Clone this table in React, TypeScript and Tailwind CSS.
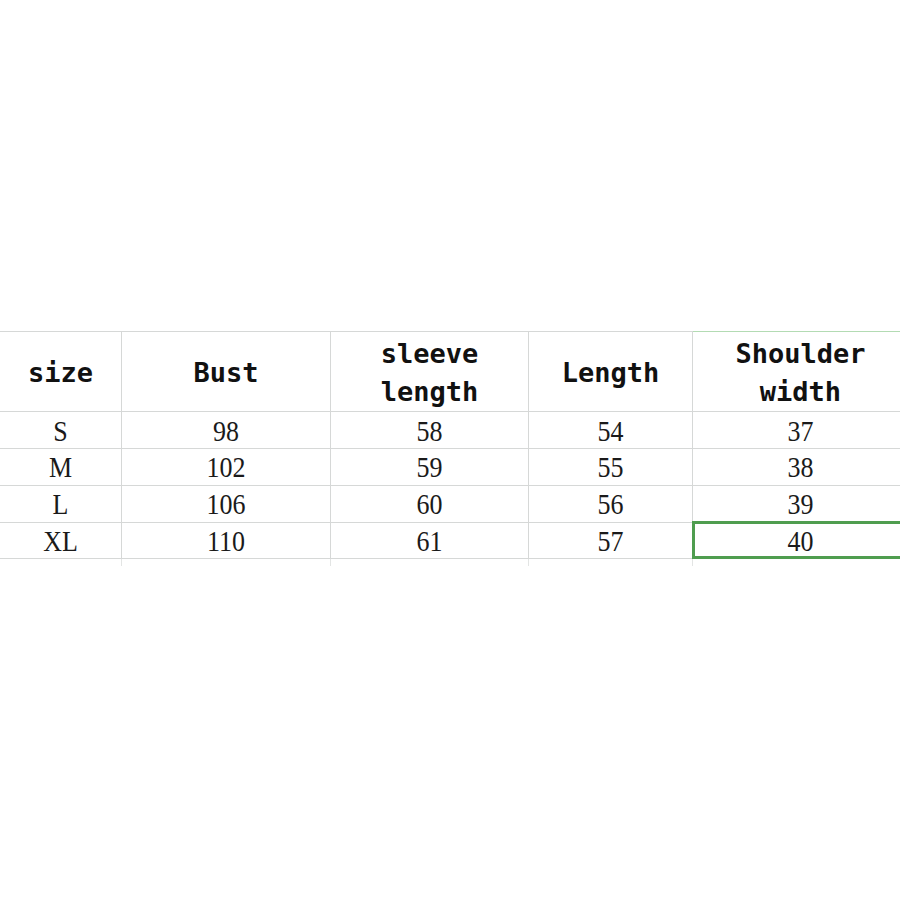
import React from 'react';

const headers = ['size', 'Bust', 'sleeve\nlength', 'Length', 'Shoulder\nwidth'];

const rows = [
  ['S', '98', '58', '54', '37'],
  ['M', '102', '59', '55', '38'],
  ['L', '106', '60', '56', '39'],
  ['XL', '110', '61', '57', '40'],
];

const cols = 'grid grid-cols-[122px_209px_198px_164px_207px]';

export default function App() {
  return (
    <div className="w-[900px] h-[900px] bg-white overflow-hidden pt-[331px]">
      {/* Header */}
      <div className={cols}>
        {headers.map((h, i) => (
          <div
            key={h}
            className={`h-[81px] pt-[3px] flex items-center justify-center border-t border-b border-[#d6d8d7] ${
              i < 4 ? 'border-r' : 'border-t-[#b3dbb3] pl-[8px]'
            }`}
          >
            <span className="whitespace-pre text-center font-['DejaVu_Sans_Mono',monospace] font-bold text-[27px] leading-[38px] text-[#111]">
              {h}
            </span>
          </div>
        ))}
      </div>

      {/* Body rows */}
      {rows.map((row, r) => (
        <div key={row[0]} className={cols}>
          {row.map((cell, i) => (
            <div
              key={i}
              className={`relative flex items-center justify-center pt-[3px] border-b border-[#d6d8d7] ${
                r % 2 === 0 ? 'h-[37px]' : 'h-[36.5px]'
              } ${i < 4 ? 'border-r' : 'pl-[8px]'}`}
            >
              <span className="inline-block scale-y-[1.12] font-['Liberation_Serif',serif] text-[26px] leading-none text-[#1a1a1a]">
                {cell}
              </span>
              {r === 3 && i === 4 && (
                <div className="absolute -top-[2px] -left-[1px] w-[240px] h-[38px] border-[3px] border-[#4f9d4f]" />
              )}
            </div>
          ))}
        </div>
      ))}

      {/* Trailing grid stubs */}
      <div className={cols}>
        {[0, 1, 2, 3, 4].map((i) => (
          <div key={i} className={`h-[7px] ${i < 4 ? 'border-r border-[#e3e5e4]' : ''}`} />
        ))}
      </div>
    </div>
  );
}
